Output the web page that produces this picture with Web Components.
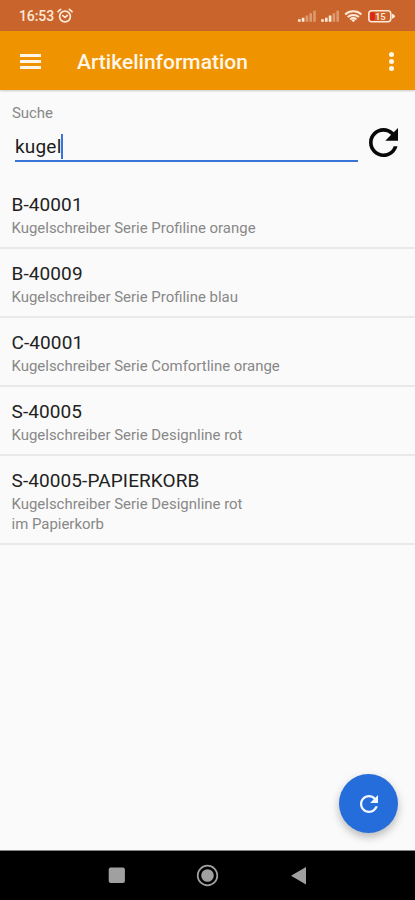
<!DOCTYPE html>
<html lang="de"><head><meta charset="utf-8"><title>Artikelinformation</title>
<style>
html,body{margin:0;padding:0;width:415px;height:900px;overflow:hidden;background:#fafafa;font-family:Roboto,sans-serif}
</style></head><body>
<article-app></article-app>
<script>
const define = (name, html) => customElements.define(name, class extends HTMLElement {
  constructor() {
    super();
    this.attachShadow({ mode: 'open' }).innerHTML = html;
  }
});

define('refresh-icon', `<style>:host{display:block}svg{display:block;width:100%;height:100%}</style>
<svg viewBox="4 4 16 16"><path fill="currentColor" d="M17.65 6.35C16.2 4.9 14.21 4 12 4c-4.42 0-7.99 3.58-7.99 8s3.57 8 7.99 8c3.73 0 6.84-2.55 7.73-6h-2.08c-.82 2.33-3.04 4-5.65 4-3.31 0-6-2.69-6-6s2.69-6 6-6c1.66 0 3.14.69 4.22 1.78L13 11h7V4z"/></svg>`);

define('status-bar', `<style>
:host{display:flex;align-items:center;box-sizing:border-box;height:31px;padding:1px 14px 0 19px;background:#c9652c;color:#ffe9d8;font-size:14px;font-weight:500}
.time{width:37px;letter-spacing:-.1px;line-height:16px}.alarm{margin-left:1px}
.right{margin-left:auto}svg{display:block}
</style>
<span class="time">16:53</span>
<svg class="alarm" width="16" height="16" viewBox="0 0 16 16" fill="none" stroke="currentColor" stroke-width="1.7" stroke-linecap="round"><circle cx="8" cy="8.5" r="5.4"/><path d="M1 3.6 3.6 1.4M15 3.6 12.4 1.4M5.8 7.6 8 9.4 10.4 7.3"/></svg>
<svg class="right" width="104" height="18" viewBox="0 0 104 18">
 <g fill="currentColor"><path d="M1 12.3h2.6v2.5H1zM4.8 10.8h2.6v4H4.8z"/><path opacity=".4" d="M8.6 8.6h2.6v6.2H8.6zM12.4 6.2H15v8.6h-2.6zM16.2 3.8h2.6v11h-2.6z"/>
 <path d="M24.2 12.3h2.6v2.5h-2.6zM28 10.8h2.6v4H28zM31.8 8.6h2.6v6.2h-2.6z"/><path opacity=".4" d="M35.6 6.2h2.6v8.6h-2.6zM39.4 3.8H42v11h-2.6z"/></g>
 <g fill="none" stroke="currentColor" stroke-width="2.1"><path d="M48.2 7.4C52.6 3.2 60 3.2 64.4 7.4M50.7 10.1C53.8 7.2 58.8 7.2 61.9 10.1M53.2 12.4C55 10.7 57.6 10.7 59.4 12.4"/></g><path fill="currentColor" d="M54.2 13 56.3 15.2 58.4 13Q56.3 11.6 54.2 13z"/>
 <rect x="71.8" y="3.8" width="22" height="11" rx="3" fill="none" stroke="currentColor" stroke-width="1.6"/><path fill="currentColor" d="M95 6.8Q98 7.4 98 9.2T95 11.8z"/><rect x="73.2" y="5.2" width="4.6" height="8.2" rx="1" fill="#e32414"/>
 <text x="83.3" y="12.8" text-anchor="middle" font-family="Roboto,sans-serif" font-size="9.5" font-weight="500" fill="currentColor">15</text>
</svg>`);

define('app-bar', `<style>
:host{display:flex;align-items:center;box-sizing:border-box;height:59px;padding:2px 20px 0;background:#f09300;color:#fff6e8;box-shadow:0 1px 2px #0003;position:relative}
.menu{width:21px;height:15px;display:grid;align-content:space-between}.menu i{height:3px;background:currentColor}
h1{margin:0 0 0 36px;font-size:21px;line-height:26px;font-weight:500;letter-spacing:0;flex:1}
.more{display:grid;gap:1.6px;margin-right:1px}.more i{width:5px;height:5px;border-radius:50%;background:currentColor}
</style><div class="menu"><i></i><i></i><i></i></div><h1><slot></slot></h1><div class="more"><i></i><i></i><i></i></div>`);

define('search-field', `<style>
:host{display:block;box-sizing:border-box;height:90px;padding:14px 17px 0 12px}
label{display:block;font-size:15px;line-height:19px;letter-spacing:-.1px;color:#888}
.row{display:flex;align-items:flex-start;justify-content:space-between}
.input{display:flex;align-items:center;box-sizing:border-box;width:343px;height:30px;margin:9px 0 0 3px;border-bottom:2px solid #3b74d8;color:#1c1c1c;font-size:19px;letter-spacing:.2px}
.caret{width:2px;height:25px;background:#3b74d8}
refresh-icon{width:29px;height:29px;margin-top:5px;color:#080808}
</style><label>Suche</label><div class="row"><div class="input"><span><slot></slot></span><span class="caret"></span></div><refresh-icon></refresh-icon></div>`);

define('article-item', `<style>
:host{display:block;box-sizing:border-box;padding:12px 12px 9px 11.5px;border-bottom:2px solid #e9e9e9}
.code{font-size:19px;line-height:26px;letter-spacing:.1px;color:#222}
.text{font-size:14.95px;line-height:20px;letter-spacing:0;color:#888}
</style><div class="code"><slot name="code"></slot></div><div class="text"><slot></slot></div>`);

define('round-button', `<style>
:host{position:absolute;left:339px;top:774px;width:59px;height:59px;border-radius:50%;background:#266ddc;color:#f3f8ff;display:flex;align-items:center;justify-content:center;box-shadow:0 4px 8px #0004}
refresh-icon{width:18px;height:18px}
</style><refresh-icon></refresh-icon>`);

define('nav-bar', `<style>
:host{display:block;height:50px;background:#000;border-top:1px solid #858585;box-sizing:border-box}svg{display:block}
</style><svg width="415" height="49" viewBox="0 -.5 415 49" fill="#a0a0a0"><rect x="108.7" y="16" width="16.2" height="15.5" rx="2"/><circle cx="207.5" cy="24" r="6.3"/><circle cx="207.5" cy="24" r="9.8" fill="none" stroke="#a0a0a0" stroke-width="1.7"/><path d="M306 15.5v17.6L291 24.3z"/></svg>`);

define('article-app', `<style>
:host{display:flex;flex-direction:column;width:415px;height:900px;position:relative;background:#fafafa}
main{flex:1}
</style>
<status-bar></status-bar><app-bar>Artikelinformation</app-bar>
<main><search-field>kugel</search-field>
<article-item><span slot="code">B-40001</span>Kugelschreiber Serie Profiline orange</article-item>
<article-item><span slot="code">B-40009</span>Kugelschreiber Serie Profiline blau</article-item>
<article-item><span slot="code">C-40001</span>Kugelschreiber Serie Comfortline orange</article-item>
<article-item><span slot="code">S-40005</span>Kugelschreiber Serie Designline rot</article-item>
<article-item><span slot="code">S-40005-PAPIERKORB</span>Kugelschreiber Serie Designline rot<br>im Papierkorb</article-item>
</main><round-button></round-button><nav-bar></nav-bar>`);
</script></body></html>
